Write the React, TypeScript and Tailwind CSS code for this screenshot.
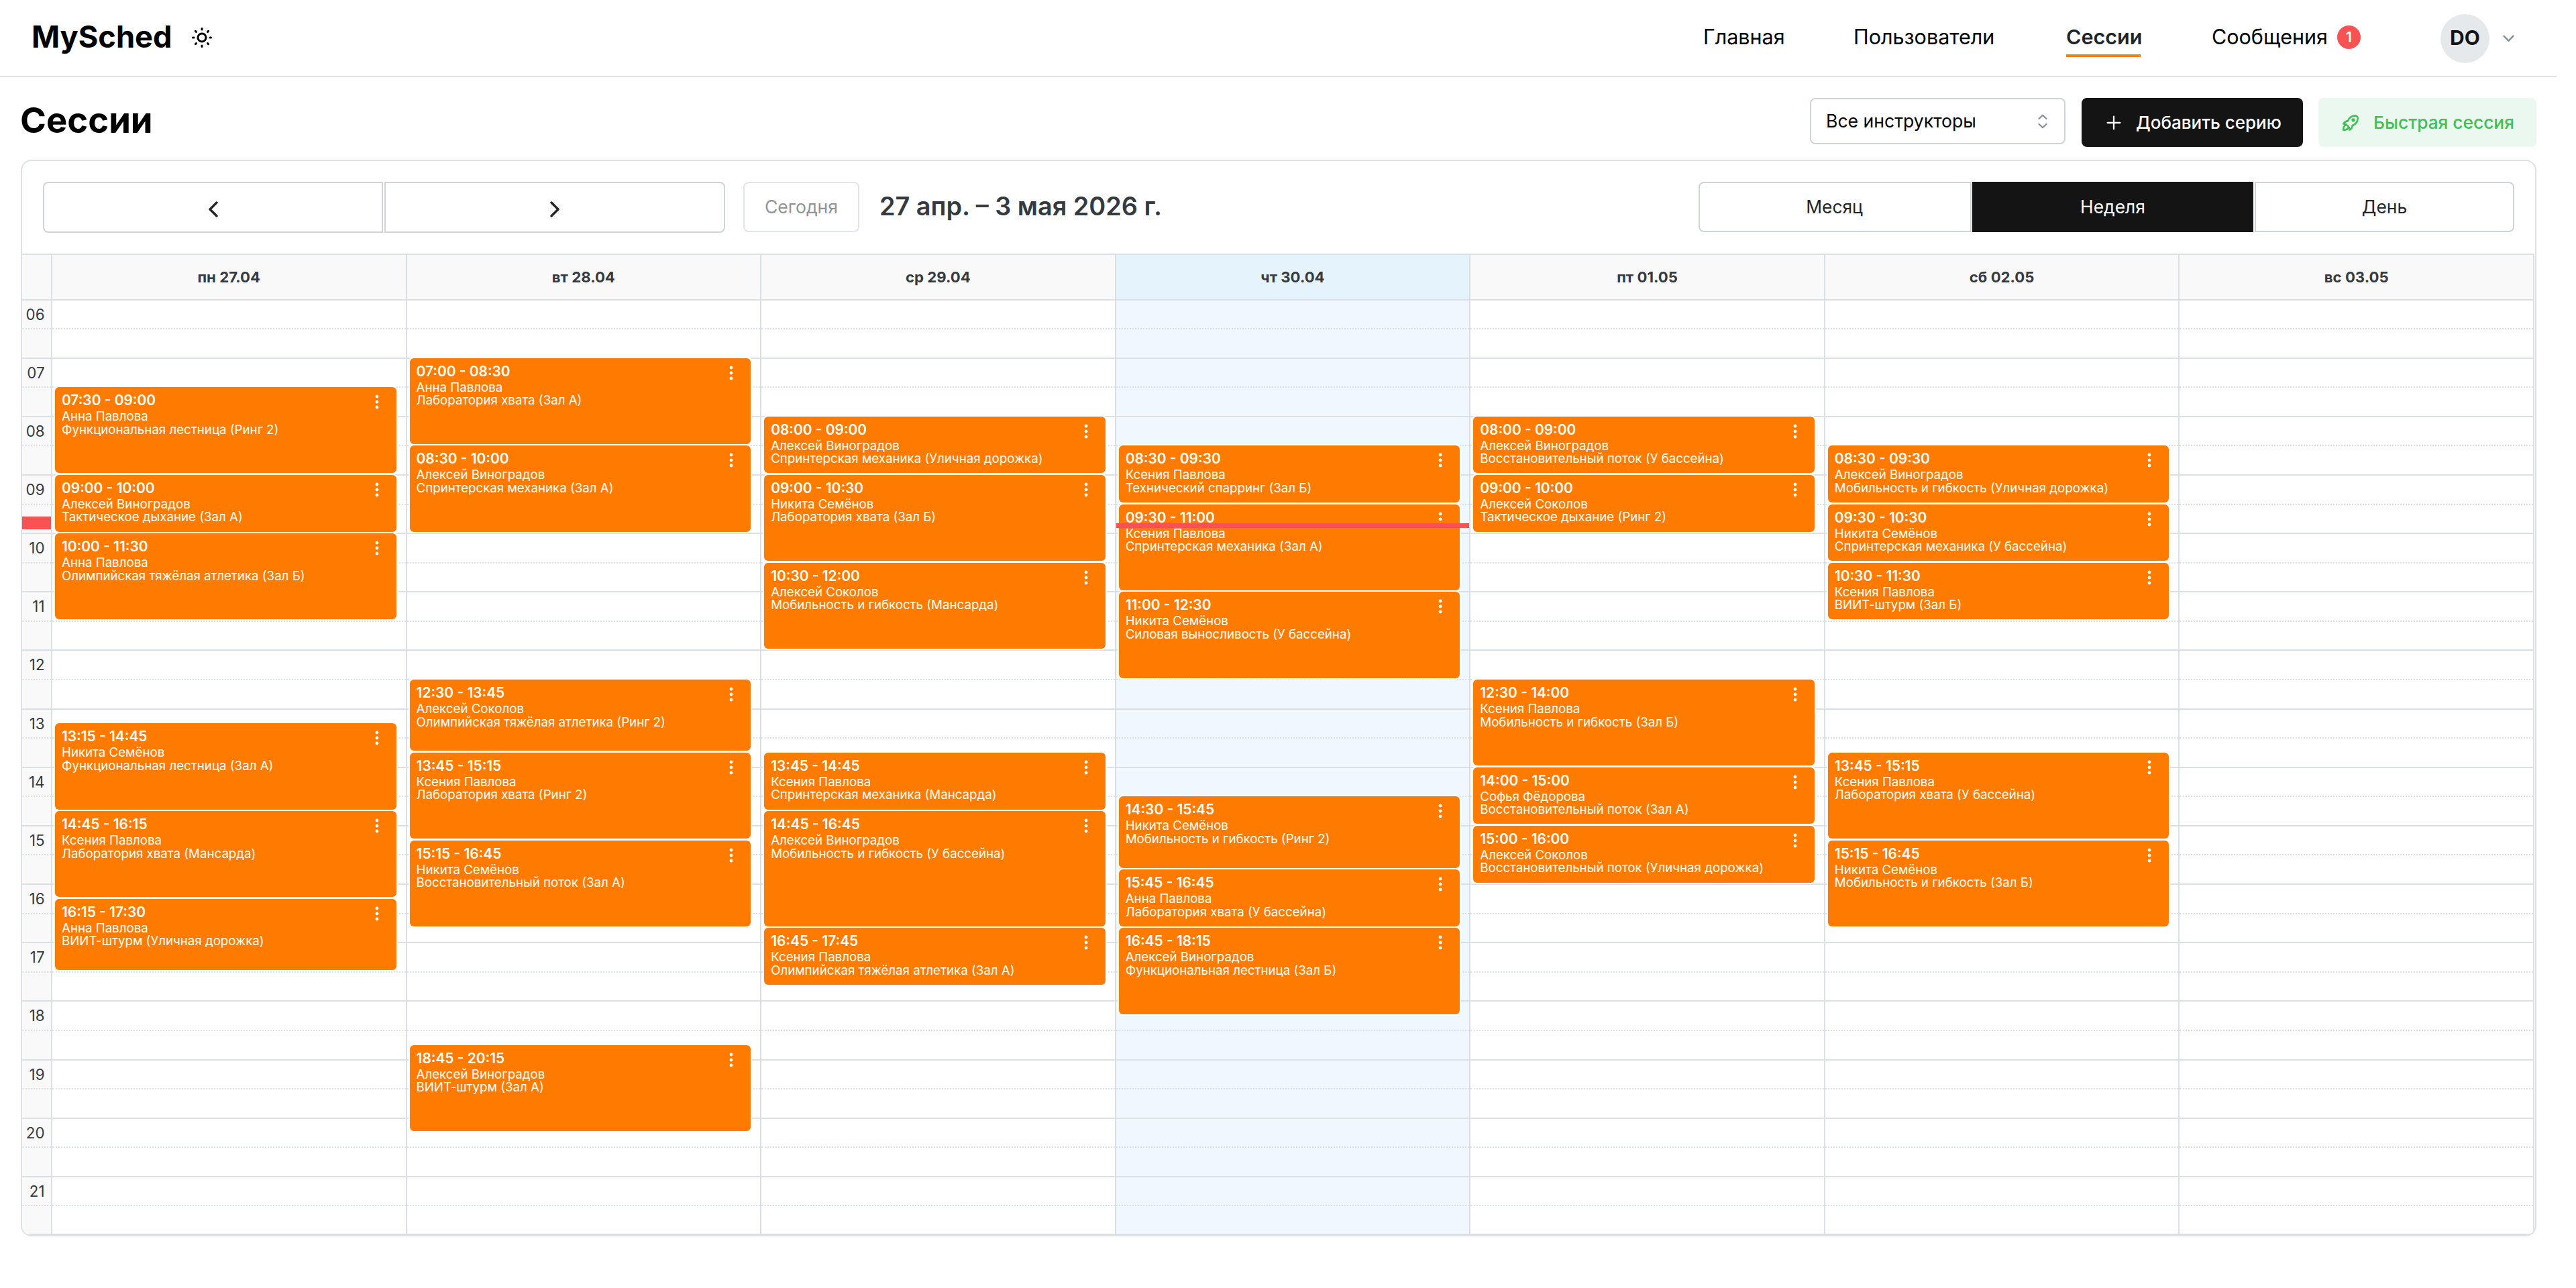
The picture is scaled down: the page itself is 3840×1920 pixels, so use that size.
import { TbPlus, TbRocket, TbSun } from 'react-icons/tb'

type Session = {
  start: string
  end: string
  coach: string
  title: string
}

type Day = {
  label: string
  today?: boolean
  sessions: Session[]
}

const FIRST_HOUR = 6
const HOURS = Array.from({ length: 16 }, (_, i) => String(i + FIRST_HOUR).padStart(2, '0'))
const HOUR_PX = 87.16

const ANNA = 'Анна Павлова'
const KSENIA = 'Ксения Павлова'
const VINOGRADOV = 'Алексей Виноградов'
const SOKOLOV = 'Алексей Соколов'
const NIKITA = 'Никита Семёнов'
const SOFIA = 'Софья Фёдорова'

const s = (start: string, end: string, coach: string, title: string): Session => ({ start, end, coach, title })

const DAYS: Day[] = [
  {
    label: 'пн 27.04',
    sessions: [
      s('07:30', '09:00', ANNA, 'Функциональная лестница (Ринг 2)'),
      s('09:00', '10:00', VINOGRADOV, 'Тактическое дыхание (Зал А)'),
      s('10:00', '11:30', ANNA, 'Олимпийская тяжёлая атлетика (Зал Б)'),
      s('13:15', '14:45', NIKITA, 'Функциональная лестница (Зал А)'),
      s('14:45', '16:15', KSENIA, 'Лаборатория хвата (Мансарда)'),
      s('16:15', '17:30', ANNA, 'ВИИТ-штурм (Уличная дорожка)'),
    ],
  },
  {
    label: 'вт 28.04',
    sessions: [
      s('07:00', '08:30', ANNA, 'Лаборатория хвата (Зал А)'),
      s('08:30', '10:00', VINOGRADOV, 'Спринтерская механика (Зал А)'),
      s('12:30', '13:45', SOKOLOV, 'Олимпийская тяжёлая атлетика (Ринг 2)'),
      s('13:45', '15:15', KSENIA, 'Лаборатория хвата (Ринг 2)'),
      s('15:15', '16:45', NIKITA, 'Восстановительный поток (Зал А)'),
      s('18:45', '20:15', VINOGRADOV, 'ВИИТ-штурм (Зал А)'),
    ],
  },
  {
    label: 'ср 29.04',
    sessions: [
      s('08:00', '09:00', VINOGRADOV, 'Спринтерская механика (Уличная дорожка)'),
      s('09:00', '10:30', NIKITA, 'Лаборатория хвата (Зал Б)'),
      s('10:30', '12:00', SOKOLOV, 'Мобильность и гибкость (Мансарда)'),
      s('13:45', '14:45', KSENIA, 'Спринтерская механика (Мансарда)'),
      s('14:45', '16:45', VINOGRADOV, 'Мобильность и гибкость (У бассейна)'),
      s('16:45', '17:45', KSENIA, 'Олимпийская тяжёлая атлетика (Зал А)'),
    ],
  },
  {
    label: 'чт 30.04',
    today: true,
    sessions: [
      s('08:30', '09:30', KSENIA, 'Технический спарринг (Зал Б)'),
      s('09:30', '11:00', KSENIA, 'Спринтерская механика (Зал А)'),
      s('11:00', '12:30', NIKITA, 'Силовая выносливость (У бассейна)'),
      s('14:30', '15:45', NIKITA, 'Мобильность и гибкость (Ринг 2)'),
      s('15:45', '16:45', ANNA, 'Лаборатория хвата (У бассейна)'),
      s('16:45', '18:15', VINOGRADOV, 'Функциональная лестница (Зал Б)'),
    ],
  },
  {
    label: 'пт 01.05',
    sessions: [
      s('08:00', '09:00', VINOGRADOV, 'Восстановительный поток (У бассейна)'),
      s('09:00', '10:00', SOKOLOV, 'Тактическое дыхание (Ринг 2)'),
      s('12:30', '14:00', KSENIA, 'Мобильность и гибкость (Зал Б)'),
      s('14:00', '15:00', SOFIA, 'Восстановительный поток (Зал А)'),
      s('15:00', '16:00', SOKOLOV, 'Восстановительный поток (Уличная дорожка)'),
    ],
  },
  {
    label: 'сб 02.05',
    sessions: [
      s('08:30', '09:30', VINOGRADOV, 'Мобильность и гибкость (Уличная дорожка)'),
      s('09:30', '10:30', NIKITA, 'Спринтерская механика (У бассейна)'),
      s('10:30', '11:30', KSENIA, 'ВИИТ-штурм (Зал Б)'),
      s('13:45', '15:15', KSENIA, 'Лаборатория хвата (У бассейна)'),
      s('15:15', '16:45', NIKITA, 'Мобильность и гибкость (Зал Б)'),
    ],
  },
  { label: 'вс 03.05', sessions: [] },
]

function offsetPx(time: string) {
  const [h, m] = time.split(':').map(Number)
  return (h - FIRST_HOUR + m / 60) * HOUR_PX
}

function Header() {
  return (
    <header className="flex h-[115px] w-[3811px] items-start border-b-2 border-[#dee2e6] pl-[47px] pr-[63px]">
      <span className="mt-[25px] w-[210px] text-[45.2px] leading-[60px] font-bold text-black">MySched</span>
      <TbSun className="mt-[38px] ml-[26px] size-9 text-black" />

      <nav className="mt-[25px] ml-auto flex gap-[106px] text-[30.5px] leading-[60px] whitespace-nowrap text-black">
        <a className="w-[118px]">Главная</a>
        <a className="w-[211px]">Пользователи</a>
        <a className="h-[60px] w-[111px] border-b-4 border-[#fb7e0b] font-semibold text-[#212529]">Сессии</a>
        <a className="flex h-[60px] items-center">
          <span className="w-[172px]">Сообщения</span>
          <span className="ml-[15px] flex size-[35px] items-center justify-center rounded-full bg-[#fa5252] text-[22px] leading-none font-semibold text-white">
            1
          </span>
        </a>
      </nav>

      <div className="mt-[21px] ml-[119px] flex items-center">
        <span className="flex size-[73px] items-center justify-center rounded-full bg-[#e6e9ec] pb-[4px] text-[30px] leading-none font-bold text-[#141414]">
          DO
        </span>
        <svg className="ml-[20px]" width="17" height="11" viewBox="0 0 17 11" fill="none" stroke="#868e96" strokeWidth="2.4" strokeLinecap="round" strokeLinejoin="round">
          <path d="M1.5 1.7 8.5 8.9 15.5 1.7" />
        </svg>
      </div>
    </header>
  )
}

function PageTitle() {
  return (
    <div className="flex h-[123px] items-start pl-[30px] pr-[59px] pt-[31px]">
      <h1 className="mt-[3px] text-[52.6px] leading-[60px] font-bold text-black">Сессии</h1>

      <div className="ml-auto flex items-start whitespace-nowrap">
        <div className="flex h-[69px] w-[381px] items-center justify-between rounded-lg border-2 border-[#ced4da] bg-white pl-[22px] pr-[25px]">
          <span className="text-[26.6px] text-black">Все инструкторы</span>
          <svg width="14" height="22" viewBox="0 0 14 22" fill="none" stroke="#868e96" strokeWidth="2.2" strokeLinecap="round" strokeLinejoin="round">
            <path d="M1.5 7 7 1.7 12.5 7M1.5 15 7 20.3 12.5 15" />
          </svg>
        </div>
        <button className="ml-[24px] flex h-[73px] w-[330px] items-center rounded-lg bg-[#141414] pl-8 text-[26px] font-medium text-white">
          <TbPlus className="size-8" strokeWidth={1.7} />
          <span className="ml-[17px]">Добавить серию</span>
        </button>
        <button className="ml-[23px] flex h-[73px] w-[325px] items-center rounded-lg bg-[#ebf8ef] pl-8 text-[26.3px] font-medium text-[#40c057]">
          <TbRocket className="size-8" />
          <span className="ml-[18px]">Быстрая сессия</span>
        </button>
      </div>
    </div>
  )
}

function Chevron({ dir }: { dir: 'left' | 'right' }) {
  return (
    <svg className="mt-[5px]" width="14" height="24" viewBox="0 0 14 24" fill="none" stroke="#212529" strokeWidth="3.4" strokeLinecap="round" strokeLinejoin="round">
      <path d={dir === 'left' ? 'M12 2 2 12 12 22' : 'M2 2 12 12 2 22'} />
    </svg>
  )
}

function Toolbar() {
  return (
    <div className="flex h-[138px] shrink-0 items-start pl-[31px] pr-[31px] pt-[31px] text-[26.4px] text-[#212529]">
      <div className="flex gap-[2px]">
        <button className="flex h-[76px] w-[507px] items-center justify-center rounded-l-lg border-2 border-[#ced4da]">
          <Chevron dir="left" />
        </button>
        <button className="flex h-[76px] w-[508px] items-center justify-center rounded-r-lg border-2 border-[#ced4da]">
          <Chevron dir="right" />
        </button>
      </div>
      <button className="ml-[27px] h-[75px] w-[173px] rounded-lg border-2 border-[#e2e6ea] text-[26.6px] text-[#909498]">
        Сегодня
      </button>
      <h2 className="ml-[30px] text-[37.8px] leading-[73px] font-semibold whitespace-nowrap text-[#343a40]">
        27 апр. – 3 мая 2026 г.
      </h2>

      <div className="ml-auto flex h-[75px]">
        <button className="w-[407px] rounded-l-lg border-2 border-[#ced4da] pr-[2px]">Месяц</button>
        <button className="ml-[1px] w-[419px] bg-[#141414] text-white">Неделя</button>
        <button className="ml-[2px] w-[387px] rounded-r-lg border-2 border-[#ced4da]">День</button>
      </div>
    </div>
  )
}

function EventCard({ session }: { session: Session }) {
  const top = offsetPx(session.start)
  const height = offsetPx(session.end) - top - 2.5
  return (
    <div
      className="absolute left-[4px] right-[14px] flex justify-between overflow-hidden rounded-[6px] bg-[#ff7b00] pl-[10px] pr-[26px] text-white shadow-[0_0_0_2px_#fff]"
      style={{ top: top + 1, height }}
    >
      <div className="whitespace-nowrap">
        <div className="mt-[7px] text-[20.9px] leading-[26px] font-semibold">
          {session.start} - {session.end}
        </div>
        <div className="mt-[1px] text-[18.7px] leading-[19.5px]">{session.coach}</div>
        <div className="text-[18.7px] leading-[19.5px]">{session.title}</div>
      </div>
      <svg className="mt-[11px] shrink-0" width="6" height="22" viewBox="0 0 6 22" fill="#fff">
        <circle cx="3" cy="3" r="2.4" />
        <circle cx="3" cy="11" r="2.4" />
        <circle cx="3" cy="19" r="2.4" />
      </svg>
    </div>
  )
}

// Пара получасовых слотов: сплошная линия на начале часа, пунктир на половине
function HourSlots({ label }: { label?: string }) {
  return (
    <>
      <div className="h-[43.58px] border-t-2 border-[#dbe0e4] pr-[9.5px] text-right text-[22.3px] leading-[41px] text-[#343a40]">
        {label}
      </div>
      <div className="h-[43.58px] border-t-2 border-dotted border-[#dbe0e4]" />
    </>
  )
}

function WeekGrid() {
  return (
    <>
      <div className="mr-[1px] grid h-[67.5px] shrink-0 grid-cols-[45px_repeat(7,minmax(0,1fr))] border-t-2 border-[#dbe0e4] bg-[#f9f9f9]">
        <div className="border-r-2 border-[#dbe0e4]" />
        {DAYS.map((d) => (
          <div
            key={d.label}
            className={`border-r-2 border-[#dbe0e4] text-center text-[22.2px] leading-[66px] font-bold text-[#343a40] ${d.today ? 'bg-[#e5f3fd]' : ''}`}
          >
            {d.label}
          </div>
        ))}
      </div>

      <div className="mr-[1px] grid min-h-0 flex-1 grid-cols-[45px_repeat(7,minmax(0,1fr))] overflow-hidden border-b-2 border-[#dbe0e4]">
        <div className="relative border-r-2 border-[#dbe0e4] bg-[#f9f9f9]">
          {HOURS.map((h) => <HourSlots key={h} label={h} />)}
          <div className="absolute inset-x-0 top-[324.5px] h-[19px] bg-[#fa5252]" />
        </div>
        {DAYS.map((d) => (
          <div key={d.label} className={`relative border-r-2 border-[#dbe0e4] ${d.today ? 'bg-[#eff7ff]' : ''}`}>
            {HOURS.map((h) => <HourSlots key={h} />)}
            {d.sessions.map((e) => <EventCard key={e.start} session={e} />)}
            {d.today && <div className="absolute inset-x-0 top-[334.5px] h-[7px] bg-[#fa5252]" />}
          </div>
        ))}
      </div>
    </>
  )
}

export default function App() {
  return (
    <div className="h-[1920px] w-[3840px] overflow-hidden bg-white font-['Inter','Noto_Sans',sans-serif]">
      <Header />
      <PageTitle />
      <main className="ml-[31px] flex h-[1605px] w-[3750px] flex-col overflow-hidden rounded-2xl border-2 border-[#dee2e6] bg-white">
        <Toolbar />
        <WeekGrid />
      </main>
    </div>
  )
}
